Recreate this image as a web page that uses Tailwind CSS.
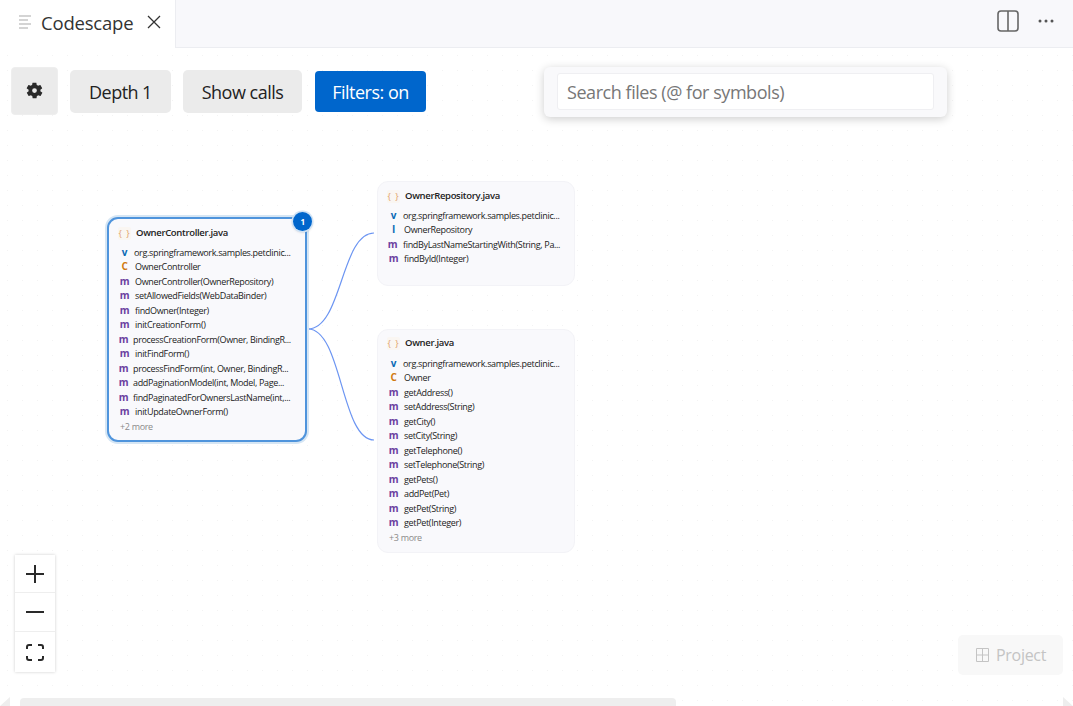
<!doctype html>
<html><head><meta charset="utf-8">
<script src="https://cdn.jsdelivr.net/npm/@tailwindcss/browser@4"></script>
</head>
<body class="m-0 overflow-hidden bg-white font-['Open_Sans','Noto_Sans',sans-serif]">
<div class="relative flex h-[706px] w-[1073px] flex-col overflow-hidden">
  <!-- tab strip -->
  <div class="flex h-[48px] items-stretch border-b border-[#ecedf1] bg-[#f8f8fb]">
    <div class="-mb-px flex w-[176px] items-center border-r border-[#ecedf1] bg-white pl-[19px]">
      <svg width="13" height="14" viewBox="0 0 13 14" class="-mt-[4px]" fill="none" stroke="#c6c6c6" stroke-width="1.5"><path d="M0 1h12M0 5h9M0 9h12M0 13h9"/></svg>
      <span class="ml-[9px] -mt-[3px] text-[18.5px] tracking-[-0.2px] text-[#333]">Codescape</span>
      <svg width="14" height="14" viewBox="0 0 14 14" class="ml-[14px] -mt-[4px]" fill="none" stroke="#333" stroke-width="1.3"><path d="M1 1l12 12M13 1L1 13"/></svg>
    </div>
    <div class="ml-auto flex items-center pr-[19px]">
      <svg width="22" height="22" viewBox="0 0 22 22" class="-mt-[5px]" fill="none" stroke="#666" stroke-width="1.6"><rect x="1" y="1" width="20" height="20" rx="3"/><path d="M11 1v20"/></svg>
      <svg width="16" height="4" viewBox="0 0 16 4" class="ml-[19px] -mt-[5px]" fill="#555"><circle cx="2" cy="2" r="1.5"/><circle cx="8" cy="2" r="1.5"/><circle cx="14" cy="2" r="1.5"/></svg>
    </div>
  </div>

  <!-- canvas -->
  <div class="relative flex-1 bg-white bg-[radial-gradient(circle,#f3f3f3_0.7px,transparent_0.8px)] bg-[size:15px_15px]">
    <!-- toolbar -->
    <div class="absolute left-[11px] top-[19px] flex items-center">
      <button class="flex h-[48px] w-[47px] items-center justify-center rounded-[4px] border border-[#eeeeee] bg-[#ebebeb]">
        <svg width="19" height="19" viewBox="0 0 24 24" fill="#2a2a2a" class="-mt-[1px] -ml-[1px]"><path d="M19.4 13c.1-.3.1-.7.1-1s0-.7-.1-1l2.100-1.600c.2-.2.2-.4.1-.6l-2-3.500c-.1-.2-.4-.3-.6-.2l-2.500 1c-.5-.4-1.100-.7-1.700-1l-.4-2.600c0-.2-.3-.4-.5-.4h-4c-.2 0-.5.2-.5.4l-.4 2.600c-.6.3-1.200.6-1.700 1l-2.500-1c-.2-.1-.5 0-.6.2l-2 3.500c-.1.2-.1.4.1.6L4.600 11c-.1.3-.1.700-.1 1s0 .7.1 1l-2.100 1.600c-.2.200-.2.400-.1.600l2 3.500c.1.200.4.300.6.200l2.500-1c.5.400 1.100.7 1.700 1l.4 2.600c0 .2.3.4.5.4h4c.2 0 .5-.2.5-.4l.4-2.600c.6-.3 1.200-.6 1.700-1l2.500 1c.2.100.5 0 .6-.2l2-3.500c.1-.2.1-.4-.1-.6zM12 15a3 3 0 1 1 0-6 3 3 0 0 1 0 6z"/></svg>
      </button>
      <button class="ml-[12px] h-[43px] w-[101px] rounded-[5px] bg-[#ebebeb] pt-[2px] text-[18px] tracking-[-0.55px] text-[#222]">Depth 1</button>
      <button class="ml-[12px] h-[43px] w-[119px] rounded-[5px] bg-[#ebebeb] pt-[2px] text-[18px] tracking-[-0.5px] text-[#222]">Show calls</button>
      <button class="ml-[13px] h-[41px] w-[111px] rounded-[4px] bg-[#0066cc] pt-[2px] text-[18px] tracking-[-0.5px] text-white">Filters: on</button>
    </div>

    <!-- search -->
    <div class="absolute left-[544px] top-[19px] h-[50px] w-[403px] rounded-[6px] bg-[#f9f9fb] px-[13px] py-[6px] shadow-[0_2px_10px_rgba(0,0,0,0.2)]">
      <div class="flex h-[37px] items-center rounded-[3px] border border-[#efeff2] bg-white pl-[9px] pt-[2px] text-[18px] tracking-[-0.45px] text-[#777]">Search files (@ for symbols)</div>
    </div>

    <!-- edges -->
    <svg class="absolute left-0 top-0" width="1073" height="658" fill="none" stroke="#6c95f2" stroke-width="1.2">
      <path d="M308 281C342 281 341 185 374 185"/>
      <path d="M308 281C342 281 341 392 374 392"/>
    </svg>

    <!-- node: OwnerController -->
    <div class="absolute left-[107px] top-[169px] h-[225px] w-[200px] rounded-[11px] border-2 border-[#4f94dc] bg-[#f9f9fc] pt-[6px] text-[9px] tracking-[-0.33px] text-[#222] shadow-[0_0_0_2px_#d6e6f4]">
      <div class="ml-[9px] flex h-[17px] items-center">
        <span class="flex h-[13px] w-[13px] items-center justify-center rounded-[2px] bg-[#faf6f2] text-[9px] tracking-[1px] text-[#e0a06a]">{ }</span>
        <span class="ml-[5px] text-[9.5px] font-semibold text-[#222]">OwnerController.java</span>
      </div>
      <div class="mt-[3px] text-[#222]">
        <div class="ml-[9px] flex h-[14.5px] items-center whitespace-nowrap"><span class="w-[13px] text-center text-[10px] font-bold text-[#0a6ab5]">v</span><span class="ml-[3px]">org.springframework.samples.petclinic...</span></div>
        <div class="ml-[9px] flex h-[14.5px] items-center whitespace-nowrap"><span class="w-[13px] text-center text-[10px] font-bold text-[#d07a10]">C</span><span class="ml-[4px]">OwnerController</span></div>
        <div class="ml-[9px] flex h-[14.5px] items-center whitespace-nowrap"><span class="w-[13px] text-center text-[10px] font-bold text-[#6b3fa0]">m</span><span class="ml-[4px]">OwnerController(OwnerRepository)</span></div>
        <div class="ml-[9px] flex h-[14.5px] items-center whitespace-nowrap"><span class="w-[13px] text-center text-[10px] font-bold text-[#6b3fa0]">m</span><span class="ml-[4px]">setAllowedFields(WebDataBinder)</span></div>
        <div class="ml-[9px] flex h-[14.5px] items-center whitespace-nowrap"><span class="w-[13px] text-center text-[10px] font-bold text-[#6b3fa0]">m</span><span class="ml-[4px]">findOwner(Integer)</span></div>
        <div class="ml-[9px] flex h-[14.5px] items-center whitespace-nowrap"><span class="w-[13px] text-center text-[10px] font-bold text-[#6b3fa0]">m</span><span class="ml-[4px]">initCreationForm()</span></div>
        <div class="ml-[8px] flex h-[14.5px] items-center whitespace-nowrap"><span class="w-[13px] text-center text-[10px] font-bold text-[#6b3fa0]">m</span><span class="ml-[3px]">processCreationForm(Owner, BindingR...</span></div>
        <div class="ml-[9px] flex h-[14.5px] items-center whitespace-nowrap"><span class="w-[13px] text-center text-[10px] font-bold text-[#6b3fa0]">m</span><span class="ml-[4px]">initFindForm()</span></div>
        <div class="ml-[8px] flex h-[14.5px] items-center whitespace-nowrap"><span class="w-[13px] text-center text-[10px] font-bold text-[#6b3fa0]">m</span><span class="ml-[3px]">processFindForm(int, Owner, BindingR...</span></div>
        <div class="ml-[8px] flex h-[14.5px] items-center whitespace-nowrap"><span class="w-[13px] text-center text-[10px] font-bold text-[#6b3fa0]">m</span><span class="ml-[3px]">addPaginationModel(int, Model, Page...</span></div>
        <div class="ml-[8px] flex h-[14.5px] items-center whitespace-nowrap"><span class="w-[13px] text-center text-[10px] font-bold text-[#6b3fa0]">m</span><span class="ml-[3px]">findPaginatedForOwnersLastName(int,...</span></div>
        <div class="ml-[9px] flex h-[14.5px] items-center whitespace-nowrap"><span class="w-[13px] text-center text-[10px] font-bold text-[#6b3fa0]">m</span><span class="ml-[4px]">initUpdateOwnerForm()</span></div>
        <div class="ml-[11px] flex h-[14.5px] items-center text-[#8a8a8a]">+2 more</div>
      </div>
      <div class="absolute -right-[7px] -top-[7px] flex h-[19px] w-[19px] items-center justify-center rounded-full bg-[#0066cc] text-[8px] font-bold text-white shadow-[0_0_0_1.5px_#cfe2f5,0_1px_3px_rgba(0,0,0,0.25)]">1</div>
    </div>

    <!-- node: OwnerRepository -->
    <div class="absolute left-[377px] top-[133px] h-[105px] w-[198px] rounded-[11px] border border-[#f3f3f7] bg-[#f9f9fc] pt-[6px] text-[9px] tracking-[-0.33px] text-[#222]">
      <div class="ml-[9px] flex h-[17px] items-center">
        <span class="flex h-[13px] w-[13px] items-center justify-center rounded-[2px] bg-[#faf6f2] text-[9px] tracking-[1px] text-[#e0a06a]">{ }</span>
        <span class="ml-[5px] text-[9.5px] font-semibold">OwnerRepository.java</span>
      </div>
      <div class="mt-[3px]">
        <div class="ml-[9px] flex h-[14.5px] items-center whitespace-nowrap"><span class="w-[13px] text-center text-[10px] font-bold text-[#0a6ab5]">v</span><span class="ml-[3px]">org.springframework.samples.petclinic...</span></div>
        <div class="ml-[9px] flex h-[14.5px] items-center whitespace-nowrap"><span class="w-[13px] text-center text-[10px] font-bold text-[#0a6ab5]">I</span><span class="ml-[4px]">OwnerRepository</span></div>
        <div class="ml-[8px] flex h-[14.5px] items-center whitespace-nowrap"><span class="w-[13px] text-center text-[10px] font-bold text-[#6b3fa0]">m</span><span class="ml-[4px]">findByLastNameStartingWith(String, Pa...</span></div>
        <div class="ml-[9px] flex h-[14.5px] items-center whitespace-nowrap"><span class="w-[13px] text-center text-[10px] font-bold text-[#6b3fa0]">m</span><span class="ml-[4px]">findById(Integer)</span></div>
      </div>
    </div>

    <!-- node: Owner -->
    <div class="absolute left-[377px] top-[281px] h-[224px] w-[198px] rounded-[11px] border border-[#f3f3f7] bg-[#f9f9fc] pt-[5px] text-[9px] tracking-[-0.33px] text-[#222]">
      <div class="ml-[9px] flex h-[17px] items-center">
        <span class="flex h-[13px] w-[13px] items-center justify-center rounded-[2px] bg-[#faf6f2] text-[9px] tracking-[1px] text-[#e0a06a]">{ }</span>
        <span class="ml-[5px] text-[9.5px] font-semibold">Owner.java</span>
      </div>
      <div class="mt-[4px]">
        <div class="ml-[9px] flex h-[14.5px] items-center whitespace-nowrap"><span class="w-[13px] text-center text-[10px] font-bold text-[#0a6ab5]">v</span><span class="ml-[3px]">org.springframework.samples.petclinic...</span></div>
        <div class="ml-[9px] flex h-[14.5px] items-center whitespace-nowrap"><span class="w-[13px] text-center text-[10px] font-bold text-[#d07a10]">C</span><span class="ml-[4px]">Owner</span></div>
        <div class="ml-[9px] flex h-[14.5px] items-center whitespace-nowrap"><span class="w-[13px] text-center text-[10px] font-bold text-[#6b3fa0]">m</span><span class="ml-[4px]">getAddress()</span></div>
        <div class="ml-[9px] flex h-[14.5px] items-center whitespace-nowrap"><span class="w-[13px] text-center text-[10px] font-bold text-[#6b3fa0]">m</span><span class="ml-[4px]">setAddress(String)</span></div>
        <div class="ml-[9px] flex h-[14.5px] items-center whitespace-nowrap"><span class="w-[13px] text-center text-[10px] font-bold text-[#6b3fa0]">m</span><span class="ml-[4px]">getCity()</span></div>
        <div class="ml-[9px] flex h-[14.5px] items-center whitespace-nowrap"><span class="w-[13px] text-center text-[10px] font-bold text-[#6b3fa0]">m</span><span class="ml-[4px]">setCity(String)</span></div>
        <div class="ml-[9px] flex h-[14.5px] items-center whitespace-nowrap"><span class="w-[13px] text-center text-[10px] font-bold text-[#6b3fa0]">m</span><span class="ml-[4px]">getTelephone()</span></div>
        <div class="ml-[9px] flex h-[14.5px] items-center whitespace-nowrap"><span class="w-[13px] text-center text-[10px] font-bold text-[#6b3fa0]">m</span><span class="ml-[4px]">setTelephone(String)</span></div>
        <div class="ml-[9px] flex h-[14.5px] items-center whitespace-nowrap"><span class="w-[13px] text-center text-[10px] font-bold text-[#6b3fa0]">m</span><span class="ml-[4px]">getPets()</span></div>
        <div class="ml-[9px] flex h-[14.5px] items-center whitespace-nowrap"><span class="w-[13px] text-center text-[10px] font-bold text-[#6b3fa0]">m</span><span class="ml-[4px]">addPet(Pet)</span></div>
        <div class="ml-[9px] flex h-[14.5px] items-center whitespace-nowrap"><span class="w-[13px] text-center text-[10px] font-bold text-[#6b3fa0]">m</span><span class="ml-[4px]">getPet(String)</span></div>
        <div class="ml-[9px] flex h-[14.5px] items-center whitespace-nowrap"><span class="w-[13px] text-center text-[10px] font-bold text-[#6b3fa0]">m</span><span class="ml-[4px]">getPet(Integer)</span></div>
        <div class="ml-[11px] flex h-[14.5px] items-center text-[#8a8a8a]">+3 more</div>
      </div>
    </div>

    <!-- zoom controls -->
    <div class="absolute left-[15px] top-[507px] flex w-[40px] flex-col divide-y divide-[#eeeeee] bg-white shadow-[0_0_3px_rgba(0,0,0,0.2)]">
      <div class="flex h-[38px] items-center justify-center"><svg width="18" height="18" viewBox="0 0 18 18" stroke="#2a2a2a" stroke-width="2"><path d="M0 9h18M9 0v18"/></svg></div>
      <div class="flex h-[39px] items-center justify-center"><svg width="18" height="18" viewBox="0 0 18 18" stroke="#2a2a2a" stroke-width="2"><path d="M0 9h18"/></svg></div>
      <div class="flex h-[40px] items-center justify-center"><svg width="18" height="17" viewBox="0 0 18 17" fill="none" stroke="#2a2a2a" stroke-width="2"><path d="M1 5V3a2 2 0 0 1 2-2h3M12 1h3a2 2 0 0 1 2 2v2M17 12v2a2 2 0 0 1-2 2h-3M6 16H3a2 2 0 0 1-2-2v-2"/></svg></div>
    </div>

    <!-- project -->
    <div class="absolute left-[958px] top-[587px] flex h-[40px] w-[105px] items-center rounded-[5px] bg-[#f8f8f8] pl-[18px] text-[16px] tracking-[-0.3px] text-[#c4c4c4]">
      <svg width="13" height="14" viewBox="0 0 13 14" fill="none" stroke="#c4c4c4"><path d="M.5.5h12v13H.5zM6.500.5v13M.5 7h12"/></svg>
      <span class="ml-[7px]">Project</span>
    </div>

    <!-- scrollbar -->
    <div class="absolute bottom-0 left-[20px] h-[8px] w-[656px] rounded-t-[4px] bg-[#eeeeee]"></div>
    <svg class="absolute bottom-0 left-0" width="10" height="9" fill="#eeeeee"><path d="M0 9l10-9v9z"/></svg>
    <svg class="absolute bottom-0 right-0" width="10" height="9" fill="#eeeeee"><path d="M0 0l10 9H0z"/></svg>
  </div>
</div>
</body></html>
